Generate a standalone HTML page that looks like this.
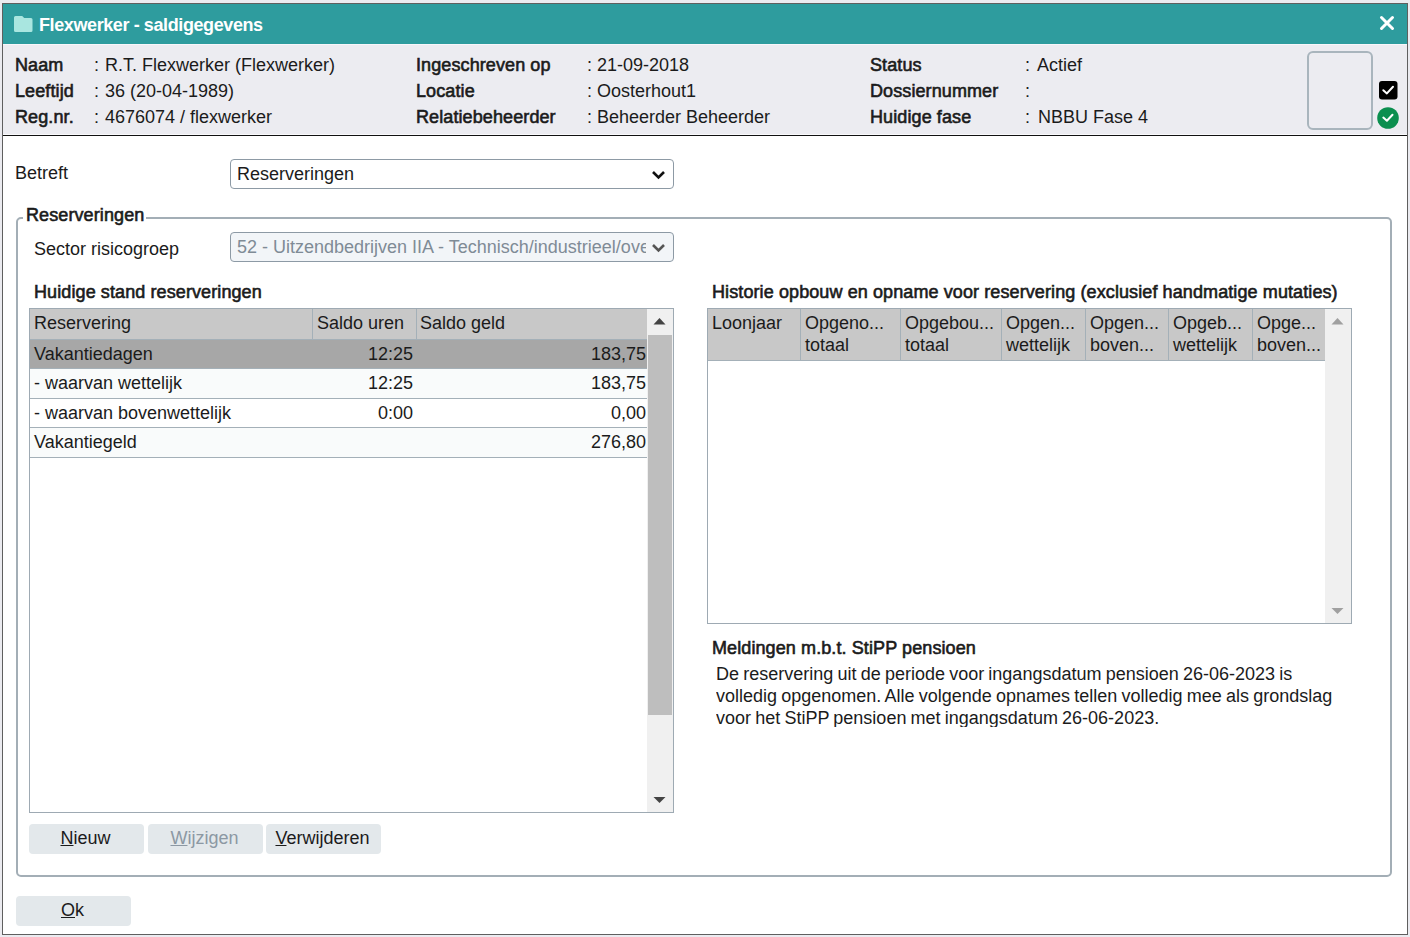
<!DOCTYPE html>
<html><head><meta charset="utf-8">
<style>
html,body{margin:0;padding:0;}
body{width:1410px;height:937px;position:relative;overflow:hidden;background:#ebebf0;font-family:"Liberation Sans",sans-serif;color:#1b1b1b;}
.a{position:absolute;white-space:nowrap;}
.t{position:absolute;white-space:nowrap;font-size:18px;line-height:20px;}
.b{font-weight:400;font-size:18px;-webkit-text-stroke:0.6px currentColor;letter-spacing:0.1px;}
#win{position:absolute;left:2px;top:3px;width:1404px;height:930px;border:1px solid #5f5f5f;background:#fff;}
#title{position:absolute;left:3px;top:4px;width:1404px;height:40px;background:#2e9c9e;}
#info{position:absolute;left:3px;top:44px;width:1404px;height:91px;background:#ececf1;border-top:1px solid #f8f6fa;box-sizing:border-box;}
#infoline{position:absolute;left:3px;top:134px;width:1404px;height:1px;background:#fafafc;}
#blk{position:absolute;left:3px;top:135px;width:1404px;height:1px;background:#111;}
.sel{position:absolute;box-sizing:border-box;border:1px solid #8d9aa5;border-radius:4px;background:#fff;}
.btn{position:absolute;box-sizing:border-box;background:#e3e8eb;border-radius:4px;font-size:18px;line-height:20px;text-align:center;}
u{text-decoration:underline;text-decoration-thickness:1.3px;text-underline-offset:1px;}
.hdr{position:absolute;background:#c8c8c8;}
.vd{position:absolute;width:1px;background:#a4b0b8;}
.hl{position:absolute;height:1px;background:#a4b0b8;}
</style></head><body>
<div id="win"></div>
<div id="title"></div>
<!-- folder icon -->
<svg class="a" style="left:14px;top:16px" width="19" height="16" viewBox="0 0 19 16"><path d="M1.5 0 H8.2 L10.2 2 H17 A1.5 1.5 0 0 1 18.5 3.5 V14.5 A1.5 1.5 0 0 1 17 16 H1.5 A1.5 1.5 0 0 1 0 14.5 V1.5 A1.5 1.5 0 0 1 1.5 0 Z" fill="#a9e6e0"/></svg>
<div class="t" style="left:39px;top:15px;color:#fff;font-weight:700;letter-spacing:-0.4px;">Flexwerker - saldigegevens</div>
<!-- close X -->
<svg class="a" style="left:1377.5px;top:14.3px" width="18" height="18" viewBox="0 0 18 18"><path d="M3.5 3.5 L14.5 14.5 M14.5 3.5 L3.5 14.5" stroke="#fff" stroke-width="3" stroke-linecap="round"/></svg>

<div id="info"></div>
<div id="infoline"></div>
<div id="blk"></div>

<div class="t b" style="left:15px;top:55px">Naam</div>
<div class="t b" style="left:15px;top:81px">Leeftijd</div>
<div class="t b" style="left:15px;top:107px">Reg.nr.</div>
<div class="t" style="left:94px;top:55px">:</div>
<div class="t" style="left:94px;top:81px">:</div>
<div class="t" style="left:94px;top:107px">:</div>
<div class="t" style="left:105px;top:55px">R.T. Flexwerker (Flexwerker)</div>
<div class="t" style="left:105px;top:81px">36 (20-04-1989)</div>
<div class="t" style="left:105px;top:107px">4676074 / flexwerker</div>

<div class="t b" style="left:416px;top:55px">Ingeschreven op</div>
<div class="t b" style="left:416px;top:81px">Locatie</div>
<div class="t b" style="left:416px;top:107px">Relatiebeheerder</div>
<div class="t" style="left:587px;top:55px">:</div>
<div class="t" style="left:587px;top:81px">:</div>
<div class="t" style="left:587px;top:107px">:</div>
<div class="t" style="left:597px;top:55px">21-09-2018</div>
<div class="t" style="left:597px;top:81px">Oosterhout1</div>
<div class="t" style="left:597px;top:107px">Beheerder Beheerder</div>

<div class="t b" style="left:870px;top:55px">Status</div>
<div class="t b" style="left:870px;top:81px">Dossiernummer</div>
<div class="t b" style="left:870px;top:107px">Huidige fase</div>
<div class="t" style="left:1025px;top:55px">:</div>
<div class="t" style="left:1025px;top:81px">:</div>
<div class="t" style="left:1025px;top:107px">:</div>
<div class="t" style="left:1037px;top:55px">Actief</div>
<div class="t" style="left:1038px;top:107px">NBBU Fase 4</div>

<!-- photo box -->
<div class="a" style="left:1307px;top:51px;width:66px;height:79px;box-sizing:border-box;border:2px solid #a9b5bd;border-radius:6px;"></div>
<svg class="a" style="left:1379px;top:81px" width="19" height="19" viewBox="0 0 19 19"><rect x="0" y="0" width="18.5" height="18.5" rx="3" fill="#000"/><path d="M4.3 9.2 L7.9 12.4 L14 5.8" stroke="#fff" stroke-width="2" fill="none" stroke-linecap="round" stroke-linejoin="round"/></svg>
<svg class="a" style="left:1377px;top:107px" width="22" height="22" viewBox="0 0 22 22"><circle cx="11" cy="11" r="10.8" fill="#0b8f4f"/><path d="M6.3 10.6 L9.9 13.8 L15.5 7.8" stroke="#fff" stroke-width="2" fill="none" stroke-linecap="round" stroke-linejoin="round"/></svg>

<!-- body -->
<div class="t" style="left:15px;top:163px">Betreft</div>
<div class="sel" style="left:230px;top:159px;width:444px;height:30px;"></div>
<div class="t" style="left:237px;top:164px">Reserveringen</div>
<svg class="a" style="left:650px;top:168px" width="17" height="13" viewBox="0 0 17 13"><path d="M3 4 L8.5 9.5 L14 4" stroke="#111" stroke-width="2.6" fill="none"/></svg>

<!-- fieldset -->
<div class="a" style="left:16px;top:217px;width:1376px;height:660px;box-sizing:border-box;border:2px solid #a3aeb6;border-radius:5px;"></div>
<div class="a" style="left:23px;top:213px;width:123px;height:8px;background:#fff;"></div>
<div class="t b" style="left:26px;top:205px">Reserveringen</div>

<div class="t" style="left:34px;top:239px">Sector risicogroep</div>
<div class="sel" style="left:230px;top:232px;width:444px;height:30px;background:#f2f5f8;"></div>
<div class="a" style="left:237px;top:237px;width:409px;height:20px;overflow:hidden;font-size:18px;line-height:20px;color:#7f8b96;">52 - Uitzendbedrijven IIA - Technisch/industrieel/overig</div>
<svg class="a" style="left:650px;top:241px" width="17" height="13" viewBox="0 0 17 13"><path d="M3 4 L8.5 9.5 L14 4" stroke="#555" stroke-width="2.6" fill="none"/></svg>

<div class="t b" style="left:34px;top:282px">Huidige stand reserveringen</div>

<!-- left table -->
<div class="a" style="left:29px;top:308px;width:645px;height:505px;box-sizing:border-box;border:1px solid #9eaab3;background:#fff;"></div>
<div class="hdr" style="left:30px;top:309px;width:617px;height:30px;"></div>
<div class="hl" style="left:30px;top:339px;width:617px;"></div>
<div class="vd" style="left:312px;top:309px;height:30px;"></div>
<div class="vd" style="left:416px;top:309px;height:30px;"></div>
<div class="t" style="left:34px;top:313px">Reservering</div>
<div class="t" style="left:317px;top:313px">Saldo uren</div>
<div class="t" style="left:420px;top:313px">Saldo geld</div>

<div class="a" style="left:30px;top:340px;width:617px;height:28px;background:#a7a7a7;"></div>
<div class="hl" style="left:30px;top:368px;width:617px;"></div>
<div class="a" style="left:30px;top:369px;width:617px;height:29px;background:#f9fbfb;"></div>
<div class="hl" style="left:30px;top:398px;width:617px;"></div>
<div class="a" style="left:30px;top:399px;width:617px;height:28px;background:#fff;"></div>
<div class="hl" style="left:30px;top:427px;width:617px;"></div>
<div class="a" style="left:30px;top:428px;width:617px;height:29px;background:#f9fbfb;"></div>
<div class="hl" style="left:30px;top:457px;width:617px;"></div>

<div class="t" style="left:34px;top:344px">Vakantiedagen</div>
<div class="t" style="left:34px;top:373px">- waarvan wettelijk</div>
<div class="t" style="left:34px;top:403px">- waarvan bovenwettelijk</div>
<div class="t" style="left:34px;top:432px">Vakantiegeld</div>
<div class="t" style="right:997px;top:344px">12:25</div>
<div class="t" style="right:997px;top:373px">12:25</div>
<div class="t" style="right:997px;top:403px">0:00</div>
<div class="t" style="right:764px;top:344px">183,75</div>
<div class="t" style="right:764px;top:373px">183,75</div>
<div class="t" style="right:764px;top:403px">0,00</div>
<div class="t" style="right:764px;top:432px">276,80</div>

<!-- scrollbar left -->
<div class="a" style="left:647px;top:309px;width:26px;height:503px;background:#f0f0f0;"></div>
<div class="a" style="left:648px;top:335px;width:24px;height:380px;background:#bebebe;"></div>
<svg class="a" style="left:653px;top:317px" width="13" height="8" viewBox="0 0 13 8"><path d="M0.5 7.5 L6.5 1 L12.5 7.5 Z" fill="#444"/></svg>
<svg class="a" style="left:653px;top:797px" width="13" height="8" viewBox="0 0 13 8"><path d="M0.5 0 L6.5 6 L12.5 0 Z" fill="#444"/></svg>

<!-- buttons -->
<div class="btn" style="left:29px;top:824px;width:115px;height:30px;padding-top:4px;text-indent:-2px;"><u>N</u>ieuw</div>
<div class="btn" style="left:148px;top:824px;width:115px;height:30px;padding-top:4px;text-indent:-2px;color:#8c98a3;"><u>W</u>ijzigen</div>
<div class="btn" style="left:266px;top:824px;width:115px;height:30px;padding-top:4px;text-indent:-2px;"><u>V</u>erwijderen</div>

<!-- right -->
<div class="t b" style="left:712px;top:282px">Historie opbouw en opname voor reservering (exclusief handmatige mutaties)</div>
<div class="a" style="left:707px;top:308px;width:645px;height:316px;box-sizing:border-box;border:1px solid #9eaab3;background:#fff;"></div>
<div class="hdr" style="left:708px;top:309px;width:617px;height:51px;"></div>
<div class="hl" style="left:708px;top:360px;width:617px;"></div>
<div class="vd" style="left:800px;top:309px;height:51px;"></div>
<div class="vd" style="left:900px;top:309px;height:51px;"></div>
<div class="vd" style="left:1001px;top:309px;height:51px;"></div>
<div class="vd" style="left:1085px;top:309px;height:51px;"></div>
<div class="vd" style="left:1168px;top:309px;height:51px;"></div>
<div class="vd" style="left:1252px;top:309px;height:51px;"></div>
<div class="t" style="left:712px;top:313px">Loonjaar</div>
<div class="t" style="left:805px;top:313px;line-height:21.5px">Opgeno...<br>totaal</div>
<div class="t" style="left:905px;top:313px;line-height:21.5px">Opgebou...<br>totaal</div>
<div class="t" style="left:1006px;top:313px;line-height:21.5px">Opgen...<br>wettelijk</div>
<div class="t" style="left:1090px;top:313px;line-height:21.5px">Opgen...<br>boven...</div>
<div class="t" style="left:1173px;top:313px;line-height:21.5px">Opgeb...<br>wettelijk</div>
<div class="t" style="left:1257px;top:313px;line-height:21.5px">Opge...<br>boven...</div>
<div class="a" style="left:1325px;top:309px;width:26px;height:314px;background:#f0f0f0;"></div>
<svg class="a" style="left:1331px;top:317px" width="13" height="8" viewBox="0 0 13 8"><path d="M0.5 7.5 L6.5 1 L12.5 7.5 Z" fill="#a0a0a0"/></svg>
<svg class="a" style="left:1331px;top:608px" width="13" height="8" viewBox="0 0 13 8"><path d="M0.5 0 L6.5 6 L12.5 0 Z" fill="#a0a0a0"/></svg>

<div class="t b" style="left:712px;top:638px">Meldingen m.b.t. StiPP pensioen</div>
<div class="a" style="left:716px;top:663px;width:640px;height:64px;overflow:hidden;font-size:18px;line-height:22px;white-space:normal;word-spacing:-0.8px;">De reservering uit de periode voor ingangsdatum pensioen 26-06-2023 is<br>volledig opgenomen. Alle volgende opnames tellen volledig mee als grondslag<br>voor het StiPP pensioen met ingangsdatum 26-06-2023.</div>

<div class="btn" style="left:16px;top:896px;width:115px;height:30px;padding-top:4px;text-indent:-2px;"><u>O</u>k</div>
</body></html>
